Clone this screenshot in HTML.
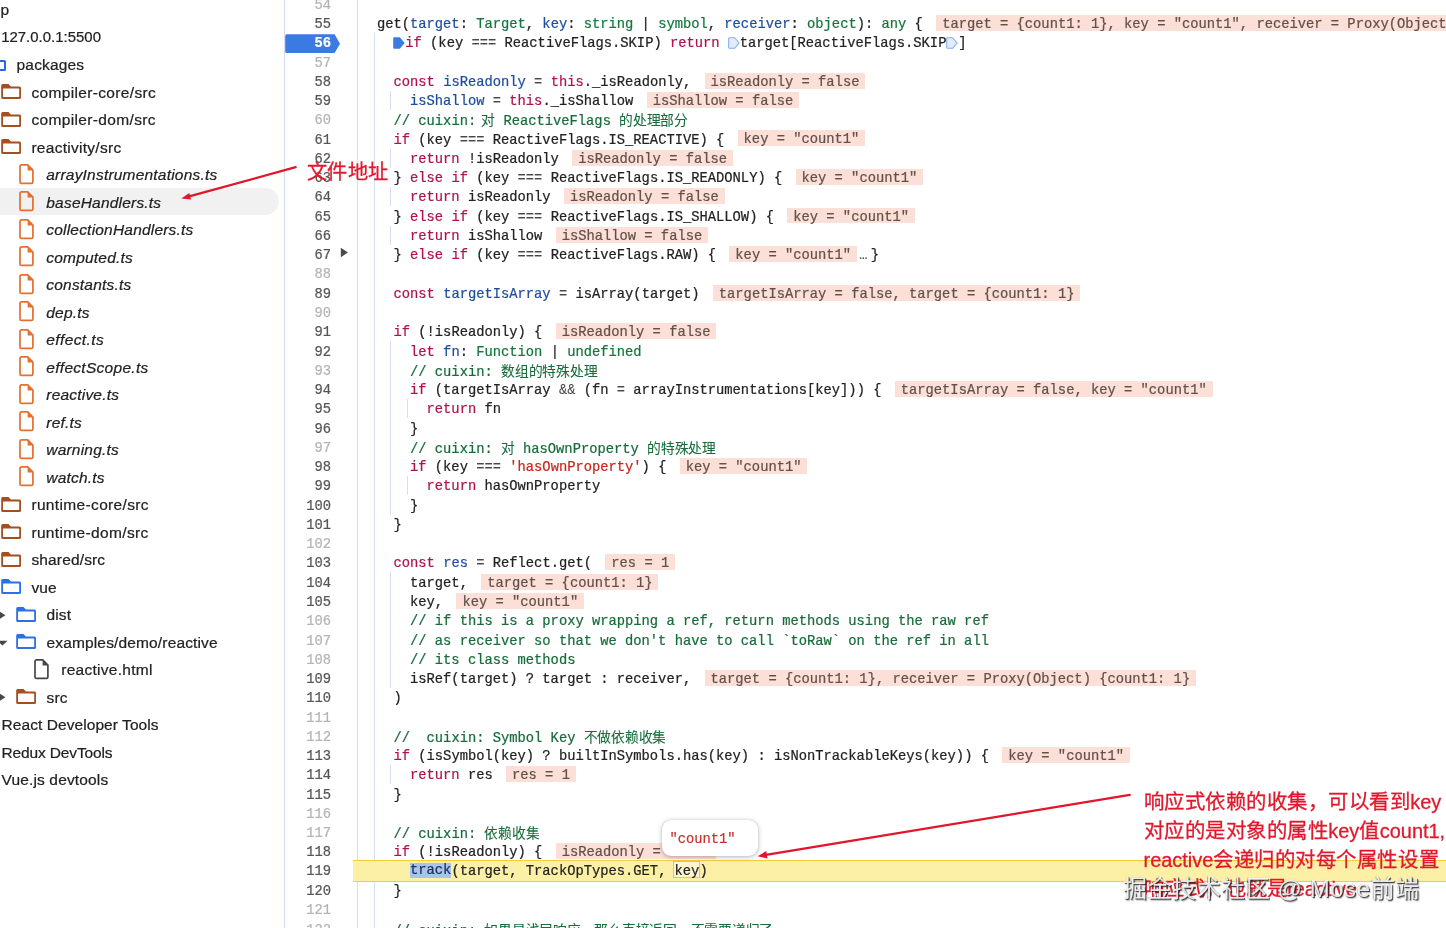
<!DOCTYPE html>
<html lang="zh-CN"><head><meta charset="utf-8"><title>DevTools</title>
<style>
html,body{margin:0;padding:0;background:#fff;}
body{width:1446px;height:928px;overflow:hidden;position:relative;font-family:"Liberation Sans",sans-serif;color:#2b2b2b;}
#side{position:absolute;left:0;top:0;width:284px;height:928px;overflow:hidden;will-change:transform;}
.sr{position:absolute;left:0;height:27.5px;line-height:27.5px;font-size:15.5px;white-space:nowrap;color:#222;letter-spacing:0.15px;-webkit-text-stroke:0.22px}
.sr.it{font-style:italic;letter-spacing:0.2px}
.sr.nm{font-size:14.9px;letter-spacing:0.03px}
.ic{position:absolute}
#sel{position:absolute;left:-20px;top:188.2px;width:299px;height:27px;border-radius:14px;background:#f1f1f1}
#div1{position:absolute;left:284px;top:0;width:1px;height:928px;background:#d6d9f3}
#code{position:absolute;left:285px;top:0;width:1161px;height:928px;overflow:hidden;will-change:transform;-webkit-text-stroke:0.22px;font-family:"Liberation Mono",monospace;font-size:13.795px;}
.ln{position:absolute;left:0;width:46.0px;text-align:right;height:19.268px;line-height:19.268px;color:#b4b4b4;white-space:pre}
.ln.d{color:#555}
.ln.b{color:#fff;font-weight:bold}
.cl{position:absolute;left:75.39999999999998px;height:19.268px;line-height:19.268px;white-space:pre;color:#222}
.g{position:absolute;width:1px;background:#d9dcf5}
.z{font-family:"Liberation Sans",sans-serif;font-size:13.75px;letter-spacing:-0.25px;-webkit-text-stroke:0.08px}
.o{color:#474747;-webkit-text-stroke:0.05px}
.k{color:#b0124f}.d{color:#1d4e9e}.t{color:#14763c}.c{color:#176c3a}.s{color:#c5281c}
.pl{display:inline-block;margin-left:13.4px;padding:0 5.9px;height:15.9px;line-height:19.7px;background:#fcdfd6;color:#62514a;vertical-align:top;margin-top:-0.1px;overflow:visible}
.bp{display:inline-block;width:11.8px;height:12px;vertical-align:top;margin-top:2.3px;line-height:0}
.bp svg{display:block}
#exec{position:absolute;left:68px;top:860px;width:1100px;height:20px;background:#fcf0a6;border-top:1px solid #f1cd3c;border-bottom:1px solid #f1cd3c}
.selx{background:#a9c3ef;color:#1d2d52;display:inline-block;height:15.2px;line-height:15.2px;vertical-align:top;margin-top:1.3px}
.keyb{display:inline-block;box-sizing:border-box;height:17.6px;line-height:19.6px;border:1px solid #eec643;background:#fdf6cf;vertical-align:top;margin:-1px -0.8px 0 -1.5px;padding:0 0 0 0.3px}
#tip{position:absolute;left:661.8px;top:820px;width:96.4px;height:36.4px;border-radius:9px;background:#fff;box-shadow:0 1px 5px rgba(0,0,0,.28),0 0 1px rgba(0,0,0,.25);font-family:"Liberation Mono",monospace;font-size:13.795px;color:#c5332b;line-height:39.8px;-webkit-text-stroke:0.2px}
#tip span{position:absolute;left:7.6px;top:0}
.ann{position:absolute;color:#e1192d;font-size:20.4px;letter-spacing:0.52px;white-space:nowrap;line-height:29px;font-family:"Liberation Sans",sans-serif;-webkit-text-stroke:0.3px}
.ann i{font-style:normal;font-size:19.95px;letter-spacing:0}
#wm{position:absolute;left:1123px;top:872.6px;font-size:24px;letter-spacing:0.55px;line-height:32px;color:rgba(255,255,255,.86);white-space:nowrap;text-shadow:1px 1px 0.8px rgba(35,35,35,.85),-0.3px -0.3px 0.8px rgba(80,80,80,.4),1.6px 1.6px 1.2px rgba(0,0,0,.25)}
#arrows{position:absolute;left:0;top:0}
</style></head><body>

<div id="side">
<div id="sel"></div>
<div class="sr" style="left:0.5px;top:-4px">p</div>
<div class="sr nm" style="left:1.2px;top:24px">127.0.0.1:5500</div>
<div class="ic" style="left:-11px;top:59.6px;width:13.1px;height:7.6px;border:2.3px solid #2a66de;border-radius:1.6px"></div>
<div class="sr" style="left:16.6px;top:51px">packages</div>
<svg class="ic" style="left:1.3px;top:84.0px" width="21" height="15" viewBox="0 0 21 15"><path d="M1.7 0.1h5.8l2.4 2.5h8.6a1.5 1.5 0 0 1 1.5 1.5v9.3a1.5 1.5 0 0 1-1.5 1.5H1.7a1.5 1.5 0 0 1-1.5-1.5V1.6a1.5 1.5 0 0 1 1.5-1.5z" fill="#a34f20"/><rect x="2" y="4.4" width="16.2" height="8.7" rx="0.5" fill="#fff"/></svg>
<div class="sr" style="left:31.4px;top:79px;letter-spacing:0.35px">compiler-core/src</div>
<svg class="ic" style="left:1.3px;top:112.0px" width="21" height="15" viewBox="0 0 21 15"><path d="M1.7 0.1h5.8l2.4 2.5h8.6a1.5 1.5 0 0 1 1.5 1.5v9.3a1.5 1.5 0 0 1-1.5 1.5H1.7a1.5 1.5 0 0 1-1.5-1.5V1.6a1.5 1.5 0 0 1 1.5-1.5z" fill="#a34f20"/><rect x="2" y="4.4" width="16.2" height="8.7" rx="0.5" fill="#fff"/></svg>
<div class="sr" style="left:31.4px;top:106px;letter-spacing:0.35px">compiler-dom/src</div>
<svg class="ic" style="left:1.3px;top:139.0px" width="21" height="15" viewBox="0 0 21 15"><path d="M1.7 0.1h5.8l2.4 2.5h8.6a1.5 1.5 0 0 1 1.5 1.5v9.3a1.5 1.5 0 0 1-1.5 1.5H1.7a1.5 1.5 0 0 1-1.5-1.5V1.6a1.5 1.5 0 0 1 1.5-1.5z" fill="#a34f20"/><rect x="2" y="4.4" width="16.2" height="8.7" rx="0.5" fill="#fff"/></svg>
<div class="sr" style="left:31.4px;top:134px;letter-spacing:0.28px">reactivity/src</div>
<svg class="ic" style="left:19.0px;top:164.0px" width="15" height="21" viewBox="0 0 15 21"><path d="M2.4 0.9h6.3l5.2 5.3v11.8a1.4 1.4 0 0 1-1.4 1.4H2.4a1.4 1.4 0 0 1-1.4-1.4V2.3A1.4 1.4 0 0 1 2.4 0.9z" fill="none" stroke="#e2702e" stroke-width="1.7"/><path d="M8.6 0.9v5.5h5.4z" fill="#e2702e"/></svg>
<div class="sr it" style="left:46.3px;top:161px">arrayInstrumentations.ts</div>
<svg class="ic" style="left:19.0px;top:191.0px" width="15" height="21" viewBox="0 0 15 21"><path d="M2.4 0.9h6.3l5.2 5.3v11.8a1.4 1.4 0 0 1-1.4 1.4H2.4a1.4 1.4 0 0 1-1.4-1.4V2.3A1.4 1.4 0 0 1 2.4 0.9z" fill="none" stroke="#e2702e" stroke-width="1.7"/><path d="M8.6 0.9v5.5h5.4z" fill="#e2702e"/></svg>
<div class="sr it" style="left:46.3px;top:189px">baseHandlers.ts</div>
<svg class="ic" style="left:19.0px;top:219.0px" width="15" height="21" viewBox="0 0 15 21"><path d="M2.4 0.9h6.3l5.2 5.3v11.8a1.4 1.4 0 0 1-1.4 1.4H2.4a1.4 1.4 0 0 1-1.4-1.4V2.3A1.4 1.4 0 0 1 2.4 0.9z" fill="none" stroke="#e2702e" stroke-width="1.7"/><path d="M8.6 0.9v5.5h5.4z" fill="#e2702e"/></svg>
<div class="sr it" style="left:46.3px;top:216px">collectionHandlers.ts</div>
<svg class="ic" style="left:19.0px;top:246.0px" width="15" height="21" viewBox="0 0 15 21"><path d="M2.4 0.9h6.3l5.2 5.3v11.8a1.4 1.4 0 0 1-1.4 1.4H2.4a1.4 1.4 0 0 1-1.4-1.4V2.3A1.4 1.4 0 0 1 2.4 0.9z" fill="none" stroke="#e2702e" stroke-width="1.7"/><path d="M8.6 0.9v5.5h5.4z" fill="#e2702e"/></svg>
<div class="sr it" style="left:46.3px;top:244px">computed.ts</div>
<svg class="ic" style="left:19.0px;top:274.0px" width="15" height="21" viewBox="0 0 15 21"><path d="M2.4 0.9h6.3l5.2 5.3v11.8a1.4 1.4 0 0 1-1.4 1.4H2.4a1.4 1.4 0 0 1-1.4-1.4V2.3A1.4 1.4 0 0 1 2.4 0.9z" fill="none" stroke="#e2702e" stroke-width="1.7"/><path d="M8.6 0.9v5.5h5.4z" fill="#e2702e"/></svg>
<div class="sr it" style="left:46.3px;top:271px">constants.ts</div>
<svg class="ic" style="left:19.0px;top:301.0px" width="15" height="21" viewBox="0 0 15 21"><path d="M2.4 0.9h6.3l5.2 5.3v11.8a1.4 1.4 0 0 1-1.4 1.4H2.4a1.4 1.4 0 0 1-1.4-1.4V2.3A1.4 1.4 0 0 1 2.4 0.9z" fill="none" stroke="#e2702e" stroke-width="1.7"/><path d="M8.6 0.9v5.5h5.4z" fill="#e2702e"/></svg>
<div class="sr it" style="left:46.3px;top:299px">dep.ts</div>
<svg class="ic" style="left:19.0px;top:329.0px" width="15" height="21" viewBox="0 0 15 21"><path d="M2.4 0.9h6.3l5.2 5.3v11.8a1.4 1.4 0 0 1-1.4 1.4H2.4a1.4 1.4 0 0 1-1.4-1.4V2.3A1.4 1.4 0 0 1 2.4 0.9z" fill="none" stroke="#e2702e" stroke-width="1.7"/><path d="M8.6 0.9v5.5h5.4z" fill="#e2702e"/></svg>
<div class="sr it" style="left:46.3px;top:326px;letter-spacing:0.39px">effect.ts</div>
<svg class="ic" style="left:19.0px;top:356.0px" width="15" height="21" viewBox="0 0 15 21"><path d="M2.4 0.9h6.3l5.2 5.3v11.8a1.4 1.4 0 0 1-1.4 1.4H2.4a1.4 1.4 0 0 1-1.4-1.4V2.3A1.4 1.4 0 0 1 2.4 0.9z" fill="none" stroke="#e2702e" stroke-width="1.7"/><path d="M8.6 0.9v5.5h5.4z" fill="#e2702e"/></svg>
<div class="sr it" style="left:46.3px;top:354px;letter-spacing:0.29px">effectScope.ts</div>
<svg class="ic" style="left:19.0px;top:384.0px" width="15" height="21" viewBox="0 0 15 21"><path d="M2.4 0.9h6.3l5.2 5.3v11.8a1.4 1.4 0 0 1-1.4 1.4H2.4a1.4 1.4 0 0 1-1.4-1.4V2.3A1.4 1.4 0 0 1 2.4 0.9z" fill="none" stroke="#e2702e" stroke-width="1.7"/><path d="M8.6 0.9v5.5h5.4z" fill="#e2702e"/></svg>
<div class="sr it" style="left:46.3px;top:381px">reactive.ts</div>
<svg class="ic" style="left:19.0px;top:411.0px" width="15" height="21" viewBox="0 0 15 21"><path d="M2.4 0.9h6.3l5.2 5.3v11.8a1.4 1.4 0 0 1-1.4 1.4H2.4a1.4 1.4 0 0 1-1.4-1.4V2.3A1.4 1.4 0 0 1 2.4 0.9z" fill="none" stroke="#e2702e" stroke-width="1.7"/><path d="M8.6 0.9v5.5h5.4z" fill="#e2702e"/></svg>
<div class="sr it" style="left:46.3px;top:409px">ref.ts</div>
<svg class="ic" style="left:19.0px;top:439.0px" width="15" height="21" viewBox="0 0 15 21"><path d="M2.4 0.9h6.3l5.2 5.3v11.8a1.4 1.4 0 0 1-1.4 1.4H2.4a1.4 1.4 0 0 1-1.4-1.4V2.3A1.4 1.4 0 0 1 2.4 0.9z" fill="none" stroke="#e2702e" stroke-width="1.7"/><path d="M8.6 0.9v5.5h5.4z" fill="#e2702e"/></svg>
<div class="sr it" style="left:46.3px;top:436px">warning.ts</div>
<svg class="ic" style="left:19.0px;top:466.0px" width="15" height="21" viewBox="0 0 15 21"><path d="M2.4 0.9h6.3l5.2 5.3v11.8a1.4 1.4 0 0 1-1.4 1.4H2.4a1.4 1.4 0 0 1-1.4-1.4V2.3A1.4 1.4 0 0 1 2.4 0.9z" fill="none" stroke="#e2702e" stroke-width="1.7"/><path d="M8.6 0.9v5.5h5.4z" fill="#e2702e"/></svg>
<div class="sr it" style="left:46.3px;top:464px">watch.ts</div>
<svg class="ic" style="left:1.3px;top:497.0px" width="21" height="15" viewBox="0 0 21 15"><path d="M1.7 0.1h5.8l2.4 2.5h8.6a1.5 1.5 0 0 1 1.5 1.5v9.3a1.5 1.5 0 0 1-1.5 1.5H1.7a1.5 1.5 0 0 1-1.5-1.5V1.6a1.5 1.5 0 0 1 1.5-1.5z" fill="#a34f20"/><rect x="2" y="4.4" width="16.2" height="8.7" rx="0.5" fill="#fff"/></svg>
<div class="sr" style="left:31.4px;top:491px;letter-spacing:0.35px">runtime-core/src</div>
<svg class="ic" style="left:1.3px;top:524.0px" width="21" height="15" viewBox="0 0 21 15"><path d="M1.7 0.1h5.8l2.4 2.5h8.6a1.5 1.5 0 0 1 1.5 1.5v9.3a1.5 1.5 0 0 1-1.5 1.5H1.7a1.5 1.5 0 0 1-1.5-1.5V1.6a1.5 1.5 0 0 1 1.5-1.5z" fill="#a34f20"/><rect x="2" y="4.4" width="16.2" height="8.7" rx="0.5" fill="#fff"/></svg>
<div class="sr" style="left:31.4px;top:519px;letter-spacing:0.35px">runtime-dom/src</div>
<svg class="ic" style="left:1.3px;top:552.0px" width="21" height="15" viewBox="0 0 21 15"><path d="M1.7 0.1h5.8l2.4 2.5h8.6a1.5 1.5 0 0 1 1.5 1.5v9.3a1.5 1.5 0 0 1-1.5 1.5H1.7a1.5 1.5 0 0 1-1.5-1.5V1.6a1.5 1.5 0 0 1 1.5-1.5z" fill="#a34f20"/><rect x="2" y="4.4" width="16.2" height="8.7" rx="0.5" fill="#fff"/></svg>
<div class="sr" style="left:31.4px;top:546px">shared/src</div>
<svg class="ic" style="left:1.3px;top:579.0px" width="21" height="15" viewBox="0 0 21 15"><path d="M1.7 0.1h5.8l2.4 2.5h8.6a1.5 1.5 0 0 1 1.5 1.5v9.3a1.5 1.5 0 0 1-1.5 1.5H1.7a1.5 1.5 0 0 1-1.5-1.5V1.6a1.5 1.5 0 0 1 1.5-1.5z" fill="#2b70e4"/><rect x="2" y="4.4" width="16.2" height="8.7" rx="0.5" fill="#fff"/></svg>
<div class="sr" style="left:31.4px;top:574px">vue</div>
<svg class="ic" style="left:16.2px;top:607.0px" width="21" height="15" viewBox="0 0 21 15"><path d="M1.7 0.1h5.8l2.4 2.5h8.6a1.5 1.5 0 0 1 1.5 1.5v9.3a1.5 1.5 0 0 1-1.5 1.5H1.7a1.5 1.5 0 0 1-1.5-1.5V1.6a1.5 1.5 0 0 1 1.5-1.5z" fill="#2b70e4"/><rect x="2" y="4.4" width="16.2" height="8.7" rx="0.5" fill="#fff"/></svg>
<div class="sr" style="left:46.5px;top:601px">dist</div>
<svg class="ic" style="left:16.2px;top:634.0px" width="21" height="15" viewBox="0 0 21 15"><path d="M1.7 0.1h5.8l2.4 2.5h8.6a1.5 1.5 0 0 1 1.5 1.5v9.3a1.5 1.5 0 0 1-1.5 1.5H1.7a1.5 1.5 0 0 1-1.5-1.5V1.6a1.5 1.5 0 0 1 1.5-1.5z" fill="#2b70e4"/><rect x="2" y="4.4" width="16.2" height="8.7" rx="0.5" fill="#fff"/></svg>
<div class="sr" style="left:46.5px;top:629px">examples/demo/reactive</div>
<svg class="ic" style="left:34.2px;top:659.0px" width="15" height="21" viewBox="0 0 15 21"><path d="M2.4 0.9h6.3l5.2 5.3v11.8a1.4 1.4 0 0 1-1.4 1.4H2.4a1.4 1.4 0 0 1-1.4-1.4V2.3A1.4 1.4 0 0 1 2.4 0.9z" fill="none" stroke="#474747" stroke-width="1.7"/><path d="M8.6 0.9v5.5h5.4z" fill="#474747"/></svg>
<div class="sr" style="left:61.3px;top:656px;letter-spacing:0.27px">reactive.html</div>
<svg class="ic" style="left:16.2px;top:689.0px" width="21" height="15" viewBox="0 0 21 15"><path d="M1.7 0.1h5.8l2.4 2.5h8.6a1.5 1.5 0 0 1 1.5 1.5v9.3a1.5 1.5 0 0 1-1.5 1.5H1.7a1.5 1.5 0 0 1-1.5-1.5V1.6a1.5 1.5 0 0 1 1.5-1.5z" fill="#a34f20"/><rect x="2" y="4.4" width="16.2" height="8.7" rx="0.5" fill="#fff"/></svg>
<div class="sr" style="left:46.5px;top:684px">src</div>
<div class="sr" style="left:1.5px;top:711px;letter-spacing:0.07px">React Developer Tools</div>
<div class="sr" style="left:1.5px;top:739px;letter-spacing:-0.14px">Redux DevTools</div>
<div class="sr" style="left:1.5px;top:766px">Vue.js devtools</div>
<svg class="ic" style="left:-4px;top:610px" width="10" height="10.6" viewBox="0 0 10 10.6"><path d="M2 0.6L9.4 5.3 2 10z" fill="#474747"/></svg>
<svg class="ic" style="left:-3.5px;top:639.5px" width="11" height="7" viewBox="0 0 11 7"><path d="M0.5 0.8h10L5.5 5.6z" fill="#474747"/></svg>
<svg class="ic" style="left:-4px;top:692.4px" width="10" height="10.6" viewBox="0 0 10 10.6"><path d="M2 0.6L9.4 5.3 2 10z" fill="#474747"/></svg>
</div>
<div id="div1"></div>
<div id="code">
<div class="g" style="left:72.3px;top:-4.30px;height:19.32px"></div>
<div class="g" style="left:72.3px;top:14.97px;height:19.32px"></div>
<div class="g" style="left:72.3px;top:34.24px;height:19.32px"></div>
<div class="g" style="left:88.8px;top:32.94px;height:19.32px"></div>
<div class="g" style="left:72.3px;top:53.50px;height:19.32px"></div>
<div class="g" style="left:88.8px;top:52.20px;height:19.32px"></div>
<div class="g" style="left:72.3px;top:72.77px;height:19.32px"></div>
<div class="g" style="left:88.8px;top:71.47px;height:19.32px"></div>
<div class="g" style="left:72.3px;top:92.04px;height:19.32px"></div>
<div class="g" style="left:88.8px;top:90.74px;height:19.32px"></div>
<div class="g" style="left:105.4px;top:90.74px;height:19.32px"></div>
<div class="g" style="left:72.3px;top:111.31px;height:19.32px"></div>
<div class="g" style="left:88.8px;top:110.01px;height:19.32px"></div>
<div class="g" style="left:72.3px;top:130.58px;height:19.32px"></div>
<div class="g" style="left:88.8px;top:129.28px;height:19.32px"></div>
<div class="g" style="left:72.3px;top:149.84px;height:19.32px"></div>
<div class="g" style="left:88.8px;top:148.54px;height:19.32px"></div>
<div class="g" style="left:105.4px;top:148.54px;height:19.32px"></div>
<div class="g" style="left:72.3px;top:169.11px;height:19.32px"></div>
<div class="g" style="left:88.8px;top:167.81px;height:19.32px"></div>
<div class="g" style="left:72.3px;top:188.38px;height:19.32px"></div>
<div class="g" style="left:88.8px;top:187.08px;height:19.32px"></div>
<div class="g" style="left:105.4px;top:187.08px;height:19.32px"></div>
<div class="g" style="left:72.3px;top:207.65px;height:19.32px"></div>
<div class="g" style="left:88.8px;top:206.35px;height:19.32px"></div>
<div class="g" style="left:72.3px;top:226.92px;height:19.32px"></div>
<div class="g" style="left:88.8px;top:225.62px;height:19.32px"></div>
<div class="g" style="left:105.4px;top:225.62px;height:19.32px"></div>
<div class="g" style="left:72.3px;top:246.18px;height:19.32px"></div>
<div class="g" style="left:88.8px;top:244.88px;height:19.32px"></div>
<div class="g" style="left:72.3px;top:265.45px;height:19.32px"></div>
<div class="g" style="left:88.8px;top:264.15px;height:19.32px"></div>
<div class="g" style="left:72.3px;top:284.72px;height:19.32px"></div>
<div class="g" style="left:88.8px;top:283.42px;height:19.32px"></div>
<div class="g" style="left:72.3px;top:303.99px;height:19.32px"></div>
<div class="g" style="left:88.8px;top:302.69px;height:19.32px"></div>
<div class="g" style="left:72.3px;top:323.26px;height:19.32px"></div>
<div class="g" style="left:88.8px;top:321.96px;height:19.32px"></div>
<div class="g" style="left:72.3px;top:342.52px;height:19.32px"></div>
<div class="g" style="left:88.8px;top:341.22px;height:19.32px"></div>
<div class="g" style="left:105.4px;top:341.22px;height:19.32px"></div>
<div class="g" style="left:72.3px;top:361.79px;height:19.32px"></div>
<div class="g" style="left:88.8px;top:360.49px;height:19.32px"></div>
<div class="g" style="left:105.4px;top:360.49px;height:19.32px"></div>
<div class="g" style="left:72.3px;top:381.06px;height:19.32px"></div>
<div class="g" style="left:88.8px;top:379.76px;height:19.32px"></div>
<div class="g" style="left:105.4px;top:379.76px;height:19.32px"></div>
<div class="g" style="left:72.3px;top:400.33px;height:19.32px"></div>
<div class="g" style="left:88.8px;top:399.03px;height:19.32px"></div>
<div class="g" style="left:105.4px;top:399.03px;height:19.32px"></div>
<div class="g" style="left:121.9px;top:399.03px;height:19.32px"></div>
<div class="g" style="left:72.3px;top:419.60px;height:19.32px"></div>
<div class="g" style="left:88.8px;top:418.30px;height:19.32px"></div>
<div class="g" style="left:105.4px;top:418.30px;height:19.32px"></div>
<div class="g" style="left:72.3px;top:438.86px;height:19.32px"></div>
<div class="g" style="left:88.8px;top:437.56px;height:19.32px"></div>
<div class="g" style="left:105.4px;top:437.56px;height:19.32px"></div>
<div class="g" style="left:72.3px;top:458.13px;height:19.32px"></div>
<div class="g" style="left:88.8px;top:456.83px;height:19.32px"></div>
<div class="g" style="left:105.4px;top:456.83px;height:19.32px"></div>
<div class="g" style="left:72.3px;top:477.40px;height:19.32px"></div>
<div class="g" style="left:88.8px;top:476.10px;height:19.32px"></div>
<div class="g" style="left:105.4px;top:476.10px;height:19.32px"></div>
<div class="g" style="left:121.9px;top:476.10px;height:19.32px"></div>
<div class="g" style="left:72.3px;top:496.67px;height:19.32px"></div>
<div class="g" style="left:88.8px;top:495.37px;height:19.32px"></div>
<div class="g" style="left:105.4px;top:495.37px;height:19.32px"></div>
<div class="g" style="left:72.3px;top:515.94px;height:19.32px"></div>
<div class="g" style="left:88.8px;top:514.64px;height:19.32px"></div>
<div class="g" style="left:72.3px;top:535.20px;height:19.32px"></div>
<div class="g" style="left:88.8px;top:533.90px;height:19.32px"></div>
<div class="g" style="left:72.3px;top:554.47px;height:19.32px"></div>
<div class="g" style="left:88.8px;top:553.17px;height:19.32px"></div>
<div class="g" style="left:72.3px;top:573.74px;height:19.32px"></div>
<div class="g" style="left:88.8px;top:572.44px;height:19.32px"></div>
<div class="g" style="left:105.4px;top:572.44px;height:19.32px"></div>
<div class="g" style="left:72.3px;top:593.01px;height:19.32px"></div>
<div class="g" style="left:88.8px;top:591.71px;height:19.32px"></div>
<div class="g" style="left:105.4px;top:591.71px;height:19.32px"></div>
<div class="g" style="left:72.3px;top:612.28px;height:19.32px"></div>
<div class="g" style="left:88.8px;top:610.98px;height:19.32px"></div>
<div class="g" style="left:105.4px;top:610.98px;height:19.32px"></div>
<div class="g" style="left:72.3px;top:631.54px;height:19.32px"></div>
<div class="g" style="left:88.8px;top:630.24px;height:19.32px"></div>
<div class="g" style="left:105.4px;top:630.24px;height:19.32px"></div>
<div class="g" style="left:72.3px;top:650.81px;height:19.32px"></div>
<div class="g" style="left:88.8px;top:649.51px;height:19.32px"></div>
<div class="g" style="left:105.4px;top:649.51px;height:19.32px"></div>
<div class="g" style="left:72.3px;top:670.08px;height:19.32px"></div>
<div class="g" style="left:88.8px;top:668.78px;height:19.32px"></div>
<div class="g" style="left:105.4px;top:668.78px;height:19.32px"></div>
<div class="g" style="left:72.3px;top:689.35px;height:19.32px"></div>
<div class="g" style="left:88.8px;top:688.05px;height:19.32px"></div>
<div class="g" style="left:72.3px;top:708.62px;height:19.32px"></div>
<div class="g" style="left:88.8px;top:707.32px;height:19.32px"></div>
<div class="g" style="left:72.3px;top:727.88px;height:19.32px"></div>
<div class="g" style="left:88.8px;top:726.58px;height:19.32px"></div>
<div class="g" style="left:72.3px;top:747.15px;height:19.32px"></div>
<div class="g" style="left:88.8px;top:745.85px;height:19.32px"></div>
<div class="g" style="left:72.3px;top:766.42px;height:19.32px"></div>
<div class="g" style="left:88.8px;top:765.12px;height:19.32px"></div>
<div class="g" style="left:105.4px;top:765.12px;height:19.32px"></div>
<div class="g" style="left:72.3px;top:785.69px;height:19.32px"></div>
<div class="g" style="left:88.8px;top:784.39px;height:19.32px"></div>
<div class="g" style="left:72.3px;top:804.96px;height:19.32px"></div>
<div class="g" style="left:88.8px;top:803.66px;height:19.32px"></div>
<div class="g" style="left:72.3px;top:824.22px;height:19.32px"></div>
<div class="g" style="left:88.8px;top:822.92px;height:19.32px"></div>
<div class="g" style="left:72.3px;top:843.49px;height:19.32px"></div>
<div class="g" style="left:88.8px;top:842.19px;height:19.32px"></div>
<div class="g" style="left:72.3px;top:882.03px;height:19.32px"></div>
<div class="g" style="left:88.8px;top:880.73px;height:19.32px"></div>
<div class="g" style="left:72.3px;top:901.30px;height:19.32px"></div>
<div class="g" style="left:88.8px;top:900.00px;height:19.32px"></div>
<div class="g" style="left:72.3px;top:920.56px;height:19.32px"></div>
<div class="g" style="left:88.8px;top:919.26px;height:19.32px"></div>
<div id="exec"></div>
<svg class="ic" style="left:0;top:33.6px" width="56" height="20" viewBox="0 0 56 20"><path d="M1.8 0.3H49.6L55 9.7 49.6 19.1H1.8A1.6 1.6 0 0 1 .2 17.5V1.9A1.6 1.6 0 0 1 1.8.3z" fill="#3b7ae3"/></svg>
<div class="ln" style="top:-4.30px">54</div>
<div class="ln d" style="top:14.97px">55</div>
<div class="cl" style="top:14.97px">  get(<span class="d">target</span>: <span class="t">Target</span>, <span class="d">key</span>: <span class="t">string</span> | <span class="t">symbol</span>, <span class="d">receiver</span>: <span class="t">object</span>): <span class="t">any</span> {<span class="pl">target = {count1: 1}, key = "count1", receiver = Proxy(Object) {count1: 1}</span></div>
<div class="ln b" style="top:34.24px">56</div>
<div class="cl" style="top:34.24px">    <span class="bp on"><svg width="12" height="12" viewBox="0 0 12 12"><path d="M1.2 0.2h5.6l4.9 5.8-4.9 5.8H1.2a1 1 0 0 1-1-1V1.2a1 1 0 0 1 1-1z" fill="#3b7ae3"/></svg></span><span class="k">if</span> (key <span class="o">===</span> ReactiveFlags.SKIP) <span class="k">return</span> <span class="bp"><svg width="12" height="12" viewBox="0 0 12 12"><path d="M1.6 0.7h5l4.5 5.3-4.5 5.3h-5a0.9 0.9 0 0 1-.9-.9V1.6a.9.9 0 0 1 .9-.9z" fill="#e2ecfc" stroke="#85aeee" stroke-width="1.1"/></svg></span>target[ReactiveFlags.SKIP<span class="bp"><svg width="12" height="12" viewBox="0 0 12 12"><path d="M1.6 0.7h5l4.5 5.3-4.5 5.3h-5a0.9 0.9 0 0 1-.9-.9V1.6a.9.9 0 0 1 .9-.9z" fill="#e2ecfc" stroke="#85aeee" stroke-width="1.1"/></svg></span>]</div>
<div class="ln" style="top:53.50px">57</div>
<div class="ln d" style="top:72.77px">58</div>
<div class="cl" style="top:72.77px">    <span class="k">const</span> <span class="d">isReadonly</span> <span class="o">=</span> <span class="k">this</span>._isReadonly,<span class="pl">isReadonly = false</span></div>
<div class="ln d" style="top:92.04px">59</div>
<div class="cl" style="top:92.04px">      <span class="d">isShallow</span> <span class="o">=</span> <span class="k">this</span>._isShallow<span class="pl">isShallow = false</span></div>
<div class="ln" style="top:111.31px">60</div>
<div class="cl" style="top:111.31px">    <span class="c">// cuixin<span style="letter-spacing:-3.1px">:</span> <span class="z">对</span> ReactiveFlags <span class="z">的处理部分</span></span></div>
<div class="ln d" style="top:130.58px">61</div>
<div class="cl" style="top:130.58px">    <span class="k">if</span> (key <span class="o">===</span> ReactiveFlags.IS_REACTIVE) {<span class="pl">key = "count1"</span></div>
<div class="ln d" style="top:149.84px">62</div>
<div class="cl" style="top:149.84px">      <span class="k">return</span> !isReadonly<span class="pl">isReadonly = false</span></div>
<div class="ln d" style="top:169.11px">63</div>
<div class="cl" style="top:169.11px">    } <span class="k">else</span> <span class="k">if</span> (key <span class="o">===</span> ReactiveFlags.IS_READONLY) {<span class="pl">key = "count1"</span></div>
<div class="ln d" style="top:188.38px">64</div>
<div class="cl" style="top:188.38px">      <span class="k">return</span> isReadonly<span class="pl">isReadonly = false</span></div>
<div class="ln d" style="top:207.65px">65</div>
<div class="cl" style="top:207.65px">    } <span class="k">else</span> <span class="k">if</span> (key <span class="o">===</span> ReactiveFlags.IS_SHALLOW) {<span class="pl">key = "count1"</span></div>
<div class="ln d" style="top:226.92px">66</div>
<div class="cl" style="top:226.92px">      <span class="k">return</span> isShallow<span class="pl">isShallow = false</span></div>
<div class="ln d" style="top:246.18px">67</div>
<div class="cl" style="top:246.18px">    } <span class="k">else</span> <span class="k">if</span> (key <span class="o">===</span> ReactiveFlags.RAW) {<span class="pl">key = "count1"</span><span style="color:#555;margin:0 3.2px 0 2.2px">…</span>}</div>
<div class="ln" style="top:265.45px">88</div>
<div class="ln d" style="top:284.72px">89</div>
<div class="cl" style="top:284.72px">    <span class="k">const</span> <span class="d">targetIsArray</span> <span class="o">=</span> isArray(target)<span class="pl">targetIsArray = false, target = {count1: 1}</span></div>
<div class="ln" style="top:303.99px">90</div>
<div class="ln d" style="top:323.26px">91</div>
<div class="cl" style="top:323.26px">    <span class="k">if</span> (!isReadonly) {<span class="pl">isReadonly = false</span></div>
<div class="ln d" style="top:342.52px">92</div>
<div class="cl" style="top:342.52px">      <span class="k">let</span> <span class="d">fn</span>: <span class="t">Function</span> | <span class="t">undefined</span></div>
<div class="ln" style="top:361.79px">93</div>
<div class="cl" style="top:361.79px">      <span class="c">// cuixin: <span class="z">数组的特殊处理</span></span></div>
<div class="ln d" style="top:381.06px">94</div>
<div class="cl" style="top:381.06px">      <span class="k">if</span> (targetIsArray <span class="o">&amp;&amp;</span> (fn <span class="o">=</span> arrayInstrumentations[key])) {<span class="pl">targetIsArray = false, key = "count1"</span></div>
<div class="ln d" style="top:400.33px">95</div>
<div class="cl" style="top:400.33px">        <span class="k">return</span> fn</div>
<div class="ln d" style="top:419.60px">96</div>
<div class="cl" style="top:419.60px">      }</div>
<div class="ln" style="top:438.86px">97</div>
<div class="cl" style="top:438.86px">      <span class="c">// cuixin: <span class="z">对</span> hasOwnProperty <span class="z">的特殊处理</span></span></div>
<div class="ln d" style="top:458.13px">98</div>
<div class="cl" style="top:458.13px">      <span class="k">if</span> (key <span class="o">===</span> <span class="s">'hasOwnProperty'</span>) {<span class="pl">key = "count1"</span></div>
<div class="ln d" style="top:477.40px">99</div>
<div class="cl" style="top:477.40px">        <span class="k">return</span> hasOwnProperty</div>
<div class="ln d" style="top:496.67px">100</div>
<div class="cl" style="top:496.67px">      }</div>
<div class="ln d" style="top:515.94px">101</div>
<div class="cl" style="top:515.94px">    }</div>
<div class="ln" style="top:535.20px">102</div>
<div class="ln d" style="top:554.47px">103</div>
<div class="cl" style="top:554.47px">    <span class="k">const</span> <span class="d">res</span> <span class="o">=</span> Reflect.get(<span class="pl">res = 1</span></div>
<div class="ln d" style="top:573.74px">104</div>
<div class="cl" style="top:573.74px">      target,<span class="pl">target = {count1: 1}</span></div>
<div class="ln d" style="top:593.01px">105</div>
<div class="cl" style="top:593.01px">      key,<span class="pl">key = "count1"</span></div>
<div class="ln" style="top:612.28px">106</div>
<div class="cl" style="top:612.28px">      <span class="c">// if this is a proxy wrapping a ref, return methods using the raw ref</span></div>
<div class="ln" style="top:631.54px">107</div>
<div class="cl" style="top:631.54px">      <span class="c">// as receiver so that we don't have to call `toRaw` on the ref in all</span></div>
<div class="ln" style="top:650.81px">108</div>
<div class="cl" style="top:650.81px">      <span class="c">// its class methods</span></div>
<div class="ln d" style="top:670.08px">109</div>
<div class="cl" style="top:670.08px">      isRef(target) ? target : receiver,<span class="pl">target = {count1: 1}, receiver = Proxy(Object) {count1: 1}</span></div>
<div class="ln d" style="top:689.35px">110</div>
<div class="cl" style="top:689.35px">    )</div>
<div class="ln" style="top:708.62px">111</div>
<div class="ln" style="top:727.88px">112</div>
<div class="cl" style="top:727.88px">    <span class="c">//  cuixin: Symbol Key <span class="z">不做依赖收集</span></span></div>
<div class="ln d" style="top:747.15px">113</div>
<div class="cl" style="top:747.15px">    <span class="k">if</span> (isSymbol(key) ? builtInSymbols.has(key) : isNonTrackableKeys(key)) {<span class="pl">key = "count1"</span></div>
<div class="ln d" style="top:766.42px">114</div>
<div class="cl" style="top:766.42px">      <span class="k">return</span> res<span class="pl">res = 1</span></div>
<div class="ln d" style="top:785.69px">115</div>
<div class="cl" style="top:785.69px">    }</div>
<div class="ln" style="top:804.96px">116</div>
<div class="ln" style="top:824.22px">117</div>
<div class="cl" style="top:824.22px">    <span class="c">// cuixin: <span class="z">依赖收集</span></span></div>
<div class="ln d" style="top:843.49px">118</div>
<div class="cl" style="top:843.49px">    <span class="k">if</span> (!isReadonly) {<span class="pl">isReadonly = false</span></div>
<div class="ln d" style="top:861.86px">119</div>
<div class="cl" style="top:861.86px">      <span class="selx">track</span>(target, TrackOpTypes.GET, <span class="keyb">key</span>)</div>
<div class="ln d" style="top:882.03px">120</div>
<div class="cl" style="top:882.03px">    }</div>
<div class="ln" style="top:901.30px">121</div>
<div class="ln" style="top:920.56px">122</div>
<div class="cl" style="top:920.56px">    <span class="c">// cuixin: <span class="z">如果是浅层响应，那么直接返回，不需要递归了</span></span></div>
<svg class="ic" style="left:55px;top:247.2px" width="9" height="11" viewBox="0 0 9 11"><path d="M0.8 0.8L8 5.5 0.8 10.2z" fill="#4a4a4a"/></svg>
</div>
<div id="tip"><span>&quot;count1&quot;</span></div>
<svg id="arrows" width="1446" height="928" viewBox="0 0 1446 928"><g stroke="#e0162b" stroke-width="2.1" stroke-linecap="round" fill="#e0162b"><g stroke-width="2.3"><line x1="295.7" y1="167.2" x2="189.2" y2="196.4"/><path d="M181.3 198.6L189.3 192.9 191.1 199.4z" stroke="none"/></g><line x1="1129.8" y1="794.9" x2="765.9" y2="854.9"/><path d="M757.6 856.3L766.3 851.0 767.5 858.5z" stroke="none"/></g></svg>
<div class="ann" style="left:307px;top:158px;font-size:20.2px;letter-spacing:0.3px">文件地址</div>
<div class="ann" style="left:1143.5px;top:788.2px">响应式依赖的收集，可以看到<i>key</i><br>对应的是对象的属性<i>key</i>值<i>count1,</i><br><i>reactive</i>会递归的对每个属性设置<br>响应式，也就是<i>reactive</i></div>
<div id="wm">掘金技术社区 @ Mose前端</div>
</body></html>
